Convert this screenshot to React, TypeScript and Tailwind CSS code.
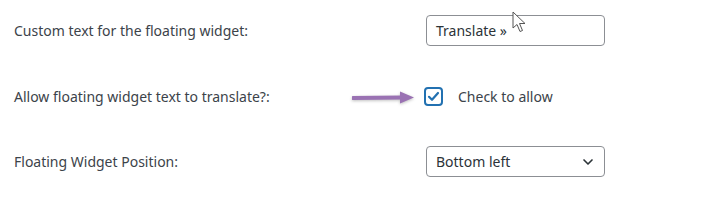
import { ChevronDown } from 'lucide-react';

const font = { fontFamily: '"Noto Sans", "Open Sans", sans-serif' };

function Row({ label, children }: { label: string; children: React.ReactNode }) {
  return (
    <div className="flex items-center h-[31px]">
      <div className="w-[412px] pl-[14px] text-[14px] text-[#3c434a]">{label}</div>
      <div className="relative flex items-center">{children}</div>
    </div>
  );
}

export default function App() {
  return (
    <div className="w-[714px] h-[205px] bg-white relative overflow-hidden" style={font}>
      <div className="flex flex-col pt-[15px]">
        {/* Custom text */}
        <Row label="Custom text for the floating widget:">
          <div className="ml-[14px] w-[179px] h-[31px] border border-[#8c8f94] rounded-[4px] px-[9px] flex items-center text-[14px] text-[#2c3338]">
            Translate »
          </div>
          {/* mouse pointer */}
          <svg
            className="absolute left-[100px] top-[-4px]"
            width="16"
            height="23"
            viewBox="0 0 16 23"
          >
            <path
              d="M1 1 L1 17 L5 13.5 L8 20.5 L10.5 19.5 L7.5 12.5 L13 12.5 Z"
              fill="white"
              stroke="#555"
              strokeWidth="1"
              strokeLinejoin="round"
            />
          </svg>
        </Row>

        <div className="mt-[35px]">
          <Row label="Allow floating widget text to translate?:">
            {/* annotation arrow */}
            <svg
              className="absolute left-[-60px] top-[4px]"
              width="64"
              height="16"
              viewBox="0 0 64 16"
              style={{ filter: 'drop-shadow(0 1.5px 1.5px rgba(0,0,0,0.25))' }}
            >
              <path d="M1 8 L50 7.5" stroke="#9a72b3" strokeWidth="4" strokeLinecap="round" />
              <path d="M48 1.5 L62 7.5 L48 13.5 Z" fill="#9a72b3" />
            </svg>
            <label className="ml-[12px] flex items-center gap-[15px]">
              <span className="w-[19px] h-[19px] border-2 border-[#2271b1] rounded-[4px] flex items-center justify-center bg-white">
                <svg width="13" height="13" viewBox="0 0 13 13">
                  <path
                    d="M2 6.8 L5 9.8 L11 3"
                    fill="none"
                    stroke="#2271b1"
                    strokeWidth="2.2"
                    strokeLinecap="round"
                    strokeLinejoin="round"
                  />
                </svg>
              </span>
              <span className="text-[14px] text-[#3c434a]">Check to allow</span>
            </label>
          </Row>
        </div>

        <div className="mt-[34px]">
          <Row label="Floating Widget Position:">
            <div className="ml-[14px] w-[179px] h-[31px] border border-[#8c8f94] rounded-[4px] pl-[9px] pr-[8px] flex items-center justify-between text-[14px] text-[#2c3338]">
              <span>Bottom left</span>
              <ChevronDown size={16} strokeWidth={2.5} color="#2c3338" />
            </div>
          </Row>
        </div>
      </div>
    </div>
  );
}
